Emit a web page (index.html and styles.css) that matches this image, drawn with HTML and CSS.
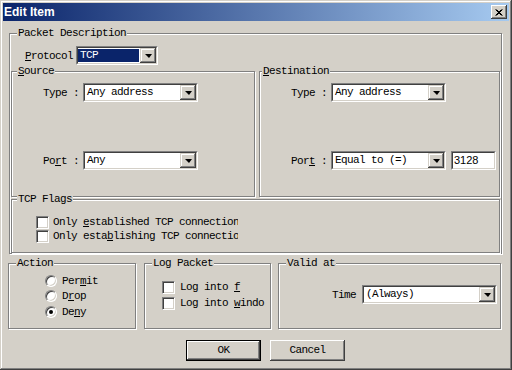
FILE: index.html
```html
<!DOCTYPE html>
<html lang="en">
<head>
    <meta charset="UTF-8">
    <title>Edit Item</title>
    <link rel="stylesheet" href="styles.css">
</head>
<body>
    <div class="window">
        <div class="titlebar">
            <span class="title">Edit Item</span>
            <span class="close-btn">
                <svg width="8" height="7" viewBox="0 0 8 7"><path d="M0.5 0.5L6.5 6.5M1.5 0.5L7.5 6.5M0.5 6.5L6.5 0.5M1.5 6.5L7.5 0.5" stroke="#000" stroke-width="1" fill="none"/></svg>
            </span>
        </div>
        <div class="dialog-body">
            <div class="group packet">
                <span class="legend">Packet Description</span>
                <div class="protocol-row">
                    <span class="label"><u>P</u>rotocol</span>
                    <div class="combo combo-protocol">
                        <div class="combo-field">
                            <span class="combo-text selected">TCP</span>
                            <span class="combo-btn"><span class="arrow"></span></span>
                        </div>
                    </div>
                </div>
                <div class="addr-row">
                    <div class="group source">
                        <span class="legend legend-near"><u>S</u>ource</span>
                        <div class="field-row">
                            <span class="label field-label">Type :</span>
                            <div class="combo combo-addr">
                                <div class="combo-field">
                                    <span class="combo-text">Any address</span>
                                    <span class="combo-btn"><span class="arrow"></span></span>
                                </div>
                            </div>
                        </div>
                        <div class="field-row port-row">
                            <span class="label field-label">Po<u>r</u>t :</span>
                            <div class="combo combo-addr">
                                <div class="combo-field">
                                    <span class="combo-text">Any</span>
                                    <span class="combo-btn"><span class="arrow"></span></span>
                                </div>
                            </div>
                        </div>
                    </div>
                    <div class="group dest">
                        <span class="legend legend-nearest"><u>D</u>estination</span>
                        <div class="field-row">
                            <span class="label field-label">Type :</span>
                            <div class="combo combo-addr">
                                <div class="combo-field">
                                    <span class="combo-text">Any address</span>
                                    <span class="combo-btn"><span class="arrow"></span></span>
                                </div>
                            </div>
                        </div>
                        <div class="field-row port-row">
                            <span class="label field-label">Por<u>t</u> :</span>
                            <div class="combo combo-addr">
                                <div class="combo-field">
                                    <span class="combo-text">Equal to (=)</span>
                                    <span class="combo-btn"><span class="arrow"></span></span>
                                </div>
                            </div>
                            <div class="textbox"><span class="textbox-inner">3128</span></div>
                        </div>
                    </div>
                </div>
                <div class="group flags">
                    <span class="legend legend-near">TCP Flags</span>
                    <div class="check-row">
                        <span class="checkbox"></span>
                        <span class="label clip">Only <u>e</u>stablished TCP connection</span>
                    </div>
                    <div class="check-row">
                        <span class="checkbox"></span>
                        <span class="label clip">Only esta<u>b</u>lishing TCP connection</span>
                    </div>
                </div>
            </div>

            <div class="bottom-row">
                <div class="group action">
                    <span class="legend">Action</span>
                    <div class="radio-row"><span class="radio"></span><span class="label">Per<u>m</u>it</span></div>
                    <div class="radio-row"><span class="radio"></span><span class="label">D<u>r</u>op</span></div>
                    <div class="radio-row"><span class="radio checked"></span><span class="label">De<u>n</u>y</span></div>
                </div>
                <div class="group log">
                    <span class="legend">Log Packet</span>
                    <div class="log-row"><span class="checkbox"></span><span class="label">Log into <u>f</u></span></div>
                    <div class="log-row"><span class="checkbox"></span><span class="label">Log into <u>w</u>indo</span></div>
                </div>
                <div class="group valid">
                    <span class="legend">Valid at</span>
                    <div class="field-row">
                        <span class="label time-label">Time</span>
                        <div class="combo combo-time">
                            <div class="combo-field">
                                <span class="combo-text">(Always)</span>
                                <span class="combo-btn"><span class="arrow"></span></span>
                            </div>
                        </div>
                    </div>
                </div>
            </div>

            <div class="buttons">
                <button class="btn btn-default"><span class="btn-face">OK</span></button>
                <button class="btn"><span class="btn-face">Cancel</span></button>
            </div>
        </div>
    </div>
</body>
</html>
```

FILE: styles.css
```css
* {
    box-sizing: border-box;
}

html, body {
    margin: 0;
    padding: 0;
    width: 512px;
    height: 370px;
    overflow: hidden;
}

body {
    font-family: "Liberation Mono", "Courier New", monospace;
    font-size: 11px;
    letter-spacing: -0.6px;
    color: #000;
    background: #d4d0c8;
}

u {
    text-decoration-thickness: 1px;
    text-underline-offset: 1px;
}

.window {
    width: 512px;
    height: 370px;
    padding: 3px;
    background: #d4d0c8;
    box-shadow: inset -1px -1px #404040, inset 1px 1px #d4d0c8,
                inset -2px -2px #808080, inset 2px 2px #fff;
}

.titlebar {
    height: 18px;
    display: flex;
    align-items: center;
    justify-content: space-between;
    padding: 0 2px 0 1px;
    background: linear-gradient(to right, #0a246a, #a6caf0);
}

.title {
    font-family: "Liberation Sans", Arial, sans-serif;
    font-weight: bold;
    font-size: 12px;
    letter-spacing: 0;
    color: #fff;
}

.close-btn {
    width: 16px;
    height: 14px;
    display: flex;
    align-items: center;
    justify-content: center;
    background: #d4d0c8;
    box-shadow: inset -1px -1px #404040, inset 1px 1px #fff,
                inset -2px -2px #808080;
}

.dialog-body {
    padding-top: 12px;
}

/* group boxes: etched border with caption over the top line */
.group {
    position: relative;
    border: 1px solid #808080;
    box-shadow: 1px 1px 0 #fff, inset 1px 1px 0 #fff;
}

.legend {
    position: absolute;
    top: -7px;
    left: 7px;
    padding: 0 1px;
    line-height: 12px;
    background: #d4d0c8;
    white-space: nowrap;
}

.legend-near {
    left: 5px;
}

.legend-nearest {
    left: 2px;
}

.label {
    white-space: nowrap;
    line-height: 12px;
}

.packet {
    margin-left: 6px;
    width: 493px;
    height: 221px;
    padding-top: 12px;
}

.protocol-row {
    display: flex;
    align-items: center;
    height: 19px;
    padding-left: 15px;
    gap: 3px;
}

.addr-row {
    display: flex;
    gap: 4px;
    margin-top: 6px;
    padding-left: 1px;
}

.source {
    width: 244px;
    height: 126px;
    padding: 11px 0 0 31px;
}

.dest {
    width: 241px;
    height: 126px;
    padding: 11px 0 0 31px;
}

.field-row {
    display: flex;
    align-items: center;
    height: 19px;
}

.port-row {
    margin-top: 49px;
}

.field-label {
    width: 40px;
}

.flags {
    margin: 2px 0 0 1px;
    width: 489px;
    height: 54px;
    padding: 15px 0 0 24px;
}

.check-row {
    display: flex;
    align-items: center;
    height: 14px;
    gap: 4px;
}

.clip {
    width: 185px;
    overflow: hidden;
}

/* combo boxes */
.combo {
    height: 19px;
    border: 1px solid;
    border-color: #808080 #fff #fff #808080;
}

.combo-field {
    height: 100%;
    display: flex;
    align-items: stretch;
    border: 1px solid;
    border-color: #404040 #d4d0c8 #d4d0c8 #404040;
    background: #fff;
}

.combo-text {
    flex: 1;
    padding-left: 2px;
    line-height: 15px;
    white-space: nowrap;
    overflow: hidden;
}

.combo-text.selected {
    background: #0a246a;
    color: #fff;
    margin: 1px 1px 1px 0;
    line-height: 13px;
}

.combo-btn {
    width: 16px;
    display: flex;
    align-items: center;
    justify-content: center;
    background: #d4d0c8;
    box-shadow: inset -1px -1px #404040, inset 1px 1px #d4d0c8,
                inset -2px -2px #808080, inset 2px 2px #fff;
}

.arrow {
    width: 0;
    height: 0;
    border-left: 4px solid transparent;
    border-right: 3px solid transparent;
    border-top: 4px solid #000;
    margin-top: 1px;
}

.combo-protocol {
    width: 82px;
}

.combo-addr {
    width: 115px;
}

.combo-time {
    width: 135px;
}

.textbox {
    width: 45px;
    height: 19px;
    margin-left: 5px;
    border: 1px solid;
    border-color: #808080 #fff #fff #808080;
}

.textbox-inner {
    display: block;
    height: 100%;
    padding-left: 1px;
    border: 1px solid;
    border-color: #404040 #d4d0c8 #d4d0c8 #404040;
    background: #fff;
    font-family: "Liberation Sans", Arial, sans-serif;
    letter-spacing: 0;
    line-height: 15px;
}

/* checkboxes and radios */
.checkbox {
    flex: none;
    width: 13px;
    height: 13px;
    border: 1px solid;
    border-color: #808080 #fff #fff #808080;
    background: #fff;
    box-shadow: inset 1px 1px #404040, inset -1px -1px #d4d0c8;
}

.radio {
    flex: none;
    position: relative;
    width: 12px;
    height: 12px;
    border-radius: 50%;
    border: 1px solid;
    border-color: #808080 #fff #fff #808080;
    background: #fff;
    box-shadow: inset 1px 1px #404040, inset -1px -1px #d4d0c8;
}

.radio.checked::after {
    content: "";
    position: absolute;
    left: 3px;
    top: 3px;
    width: 4px;
    height: 4px;
    border-radius: 50%;
    background: #000;
}

.bottom-row {
    display: flex;
    margin: 9px 0 0 5px;
    height: 66px;
}

.action {
    width: 128px;
    padding: 9px 0 0 36px;
}

.radio-row {
    display: flex;
    align-items: center;
    gap: 5px;
    height: 15.5px;
}

.log {
    width: 127px;
    margin-left: 8px;
    padding: 15px 0 0 17px;
}

.log-row {
    display: flex;
    align-items: center;
    gap: 5px;
    height: 16px;
}

.valid {
    width: 223px;
    margin-left: 7px;
    padding: 21px 0 0 53px;
}

.time-label {
    width: 30px;
}

/* push buttons */
.buttons {
    display: flex;
    gap: 9px;
    margin: 11px 0 0 183px;
}

.btn {
    width: 75px;
    height: 21px;
    padding: 0;
    border: none;
    font: inherit;
    letter-spacing: inherit;
    background: #d4d0c8;
    box-shadow: inset -1px -1px #404040, inset 1px 1px #fff,
                inset -2px -2px #808080;
}

.btn-default {
    border: 1px solid #000;
    box-shadow: inset -1px -1px #404040, inset 1px 1px #fff,
                inset -2px -2px #808080;
}

.btn-face {
    display: block;
    line-height: 19px;
    text-align: center;
}
```
